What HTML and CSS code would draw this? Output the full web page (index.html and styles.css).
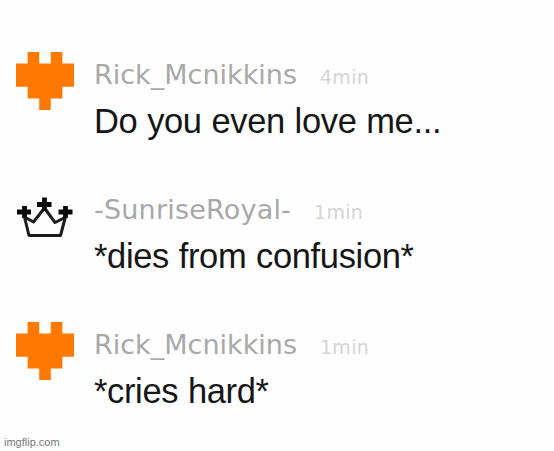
FILE: index.html
```html
<!DOCTYPE html>
<html lang="en">

<head>
    <meta charset="UTF-8">
    <meta name="viewport" content="width=device-width, initial-scale=1.0">
    <title>Comments</title>
    <link rel="stylesheet" href="styles.css">
</head>

<body>
    <svg class="sprites" width="0" height="0">
        <symbol id="heart" viewBox="0 0 5 5">
            <path d="M1 0h1v1h1V0h1v1h1v2H4v1H3v1H2V4H1V3H0V1h1z" fill="#ff7900" />
        </symbol>
        <symbol id="crown" viewBox="0 0 58 44">
            <path d="M7.500 16L13 38.500H44.500L50.500 16M8.500 20L17.500 25L28.500 11L39 25.500L50 20" fill="none" stroke="#1c1c1c" stroke-width="3" stroke-linejoin="round" />
            <path d="M1 15H15M8.500 9V21M21 7.500H35.500M28.500 0.500V14M42.500 15H56.500M49.500 9V21" fill="none" stroke="#0a0a0a" stroke-width="4.800" />
        </symbol>
    </svg>

    <main class="comments">
        <article class="comment">
            <svg class="icon"><use href="#heart" /></svg>
            <div class="content">
                <header><span class="user">Rick_Mcnikkins</span><span class="time">4min</span></header>
                <p>Do you even love me...</p>
            </div>
        </article>
        <article class="comment">
            <svg class="icon crown"><use href="#crown" /></svg>
            <div class="content">
                <header><span class="user wide">-SunriseRoyal-</span><span class="time">1min</span></header>
                <p>*dies from confusion*</p>
            </div>
        </article>
        <article class="comment">
            <svg class="icon"><use href="#heart" /></svg>
            <div class="content">
                <header><span class="user">Rick_Mcnikkins</span><span class="time">1min</span></header>
                <p>*cries hard*</p>
            </div>
        </article>
    </main>
    <footer>imgflip.com</footer>
</body>

</html>
```
FILE: styles.css
```css
* {
    box-sizing: border-box;
}

body {
    margin: 0;
    height: 451px;
    background: #fefefe;
    font-family: "Liberation Sans", Arial, sans-serif;
    overflow: hidden;
}

.sprites {
    display: none;
}

.comments {
    padding: 52px 0 0 16px;
}

.comment {
    display: flex;
    height: 135px;
}

.icon {
    flex: none;
    width: 58px;
    height: 58px;
    margin-right: 20px;
}

.crown {
    height: 44px;
    margin-top: 10px;
}

header {
    display: flex;
    align-items: baseline;
    height: 47px;
    line-height: 46px;
    white-space: nowrap;
}

.user {
    font-family: "DejaVu Sans", Verdana, sans-serif;
    font-size: 27px;
    color: #a8a8a8;
}

.wide {
    letter-spacing: 0.2px;
}

.time {
    margin-left: 23px;
    font-family: "DejaVu Sans", Verdana, sans-serif;
    font-size: 19px;
    letter-spacing: 0.3px;
    color: #d4d4d4;
}

p {
    margin: 0;
    line-height: 44px;
    font-size: 34.5px;
    letter-spacing: -0.35px;
    word-spacing: 0.5px;
    color: #161616;
    white-space: nowrap;
}

footer {
    margin-top: -22px;
    padding-left: 4px;
    font-size: 11px;
    line-height: 14px;
    color: #777;
}
```
